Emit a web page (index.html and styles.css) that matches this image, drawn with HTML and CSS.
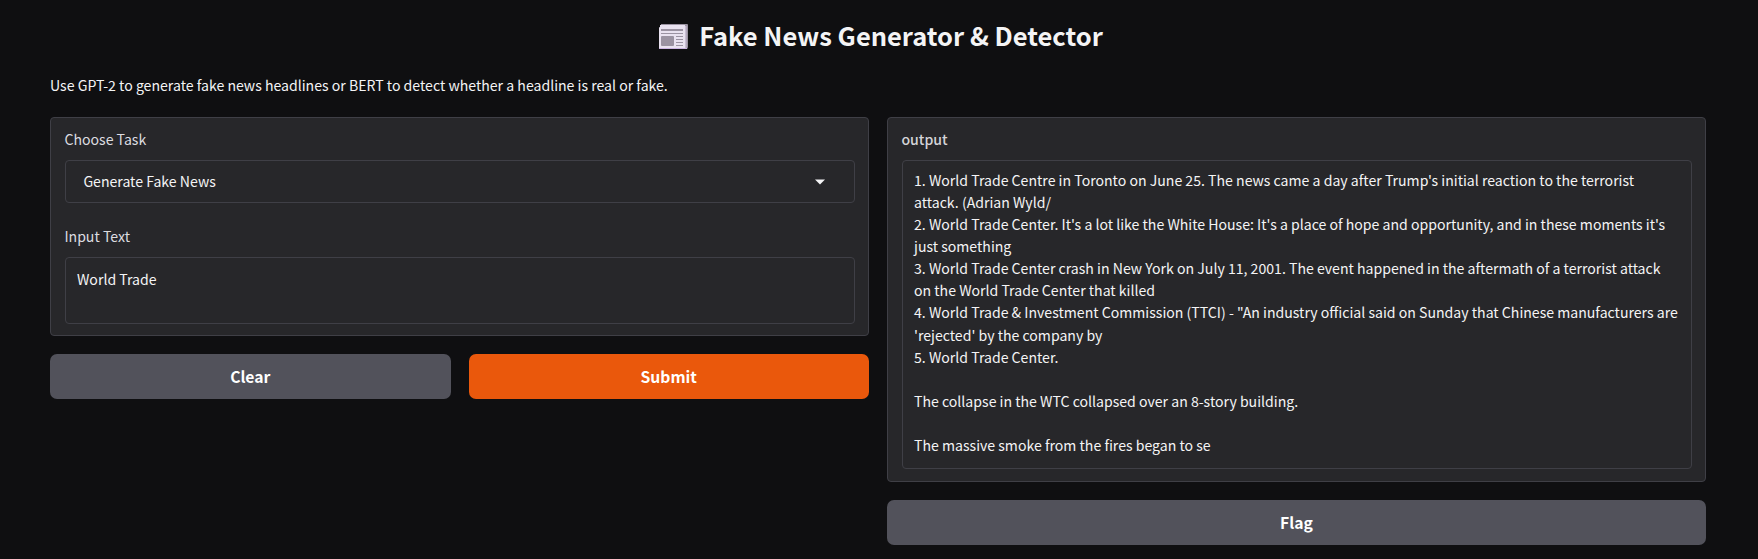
FILE: index.html
```
<!DOCTYPE html>
<html lang="en">
<head>
<meta charset="utf-8">
<title>Fake News Generator &amp; Detector</title>
<link rel="stylesheet" href="styles.css">
</head>
<body>
<main class="app">
  <h1 class="title">
    <svg class="news-icon" width="29" height="25" viewBox="0 0 29 25">
      <path d="M2 0h26a1 1 0 0 1 1 1v22a2 2 0 0 1-2 2h-2V3H2z" fill="#9b93a2"/>
      <path d="M1 1h25v24H1a1 1 0 0 1-1-1V4a1 1 0 0 1 1-1z" fill="#e9e2f0"/>
      <path d="M26 2h1.5v21.5L26 25z" fill="#c9bdd4"/>
      <path d="M0 24h28v1H0z" fill="#cbb5e2"/>
      <path d="M2 5h22v2H2zM2 9h22v1H2zM17 12h7v1h-7zM17 15h7v1h-7zM17 18h7v1h-7zM17 21h7v1h-7z" fill="#9b93a2"/>
      <rect x="2" y="12" width="13" height="10" rx="1" fill="#9b93a2"/>
    </svg>
    <span class="title-text">Fake News Generator &amp; Detector</span>
  </h1>
  <p class="description">Use GPT-2 to generate fake news headlines or BERT to detect whether a headline is real or fake.</p>
  <div class="columns">
    <section class="column">
      <div class="panel form-panel">
        <div class="label">Choose Task</div>
        <div class="field select">
          <span>Generate Fake News</span>
          <svg width="10" height="6" viewBox="0 0 10 6"><path d="M0 .5h10L5 5.5z" fill="#f4f4f5"/></svg>
        </div>
        <div class="label label-second">Input Text</div>
        <div class="field input">World Trade</div>
      </div>
      <div class="buttons">
        <button class="button">Clear</button>
        <button class="button primary">Submit</button>
      </div>
    </section>
    <section class="column">
      <div class="panel">
        <div class="label output-label">output</div>
        <div class="field output">1. World Trade Centre in Toronto on June 25. The news came a day after Trump's initial reaction to the terrorist
attack. (Adrian Wyld/
2. World Trade Center. It's a lot like the White House: It's a place of hope and opportunity, and in these moments it's
just something
3. World Trade Center crash in New York on July 11, 2001. The event happened in the aftermath of a terrorist attack
on the World Trade Center that killed
4. World Trade &amp; Investment Commission (TTCI) - "An industry official said on Sunday that Chinese manufacturers are
'rejected' by the company by
5. World Trade Center.

The collapse in the WTC collapsed over an 8-story building.

The massive smoke from the fires began to se</div>
      </div>
      <div class="buttons">
        <button class="button">Flag</button>
      </div>
    </section>
  </div>
</main>
</body>
</html>
```

FILE: styles.css
```
* { box-sizing: border-box; }

body {
  margin: 0;
  height: 559px;
  overflow: hidden;
  background: #0f0f11;
  color: #f4f4f5;
  font: 14.1px/22.05px "Noto Sans CJK SC", "Noto Sans", sans-serif;
}

.app { padding: 18px 52px 0 50px; }

.title {
  display: flex;
  justify-content: center;
  align-items: center;
  gap: 11px;
  height: 37px;
  margin: 0 0 19px;
  padding-left: 6px;
  font-size: 25.5px;
  line-height: 37px;
  font-weight: 700;
}

.news-icon { display: block; }

.title-text { padding-bottom: 4px; }

.description { margin: 0; height: 43px; }

.columns {
  display: grid;
  grid-template-columns: 1fr 1fr;
  gap: 18px;
  align-items: start;
}

.column { display: grid; gap: 18px; }

.panel {
  padding: 10px 13px 12px 14px;
  background: #27272a;
  border: 1px solid #3f3f46;
  border-radius: 4px;
}

.form-panel { padding-bottom: 11px; }

.label {
  height: 22px;
  margin: 0 0 10px -0.6px;
  color: #dddde0;
}

.label-second { margin-top: 22px; }

.output-label { color: #d4d4d8; font-weight: 500; }

.field {
  border: 1px solid #3f3f46;
  border-radius: 4px;
  padding: 10px 11px;
}

.select {
  display: flex;
  align-items: center;
  justify-content: space-between;
  height: 43px;
  padding: 0 29px 0 17.4px;
}

.input { height: 67px; }

.output { height: 309px; padding-top: 8.18px; white-space: pre; }

.buttons { display: flex; gap: 18px; }

.button {
  flex: 1;
  height: 45px;
  padding: 0;
  border: 0;
  border-radius: 7px;
  background: #52525b;
  color: #fff;
  font-family: inherit;
  font-size: 15.7px;
  font-weight: 700;
  line-height: 22px;
}

.primary { background: #ea580c; }
```
